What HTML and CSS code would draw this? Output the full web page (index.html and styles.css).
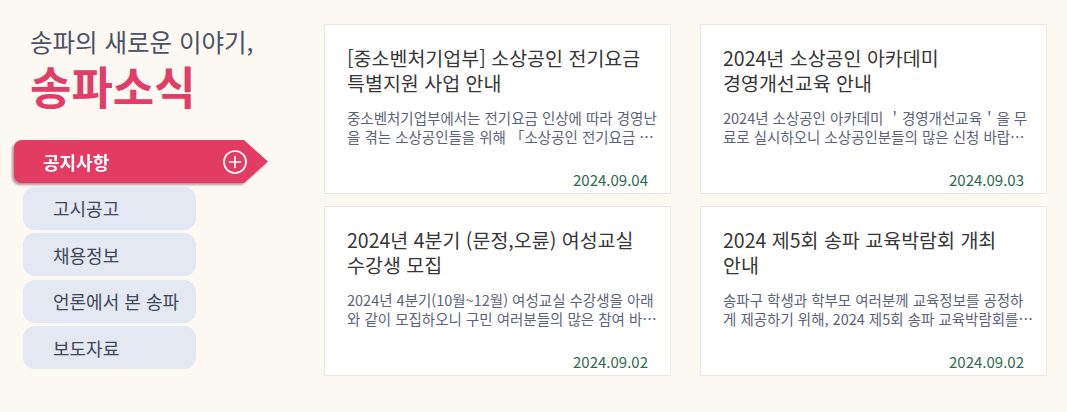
FILE: index.html
```html
<!DOCTYPE html>
<html lang="ko">
<head>
    <meta charset="UTF-8">
    <meta name="viewport" content="width=device-width, initial-scale=1.0">
    <title>송파소식</title>
    <link rel="stylesheet" href="styles.css">
</head>
<body>
    <div class="page">
        <div class="sidebar">
            <div class="heading">
                <p class="sub">송파의 새로운 이야기,</p>
                <h1>송파소식</h1>
            </div>
            <ul class="menu">
                <li class="tab-wrap">
                    <a class="tab active" href="#">
                        <span>공지사항</span>
                        <svg class="plus" width="26" height="26" viewBox="0 0 26 26">
                            <circle cx="13" cy="13" r="11" fill="none" stroke="#fff" stroke-width="1.7"/>
                            <path d="M13 7.5v11M7.5 13h11" stroke="#fff" stroke-width="1.7" stroke-linecap="round"/>
                        </svg>
                    </a>
                </li>
                <li><a class="item" href="#">고시공고</a></li>
                <li><a class="item" href="#">채용정보</a></li>
                <li><a class="item" href="#">언론에서 본 송파</a></li>
                <li><a class="item" href="#">보도자료</a></li>
            </ul>
        </div>

        <div class="cards">
            <a class="card" href="#">
                <h3>[중소벤처기업부] 소상공인 전기요금 특별지원 사업 안내</h3>
                <p class="desc">중소벤처기업부에서는 전기요금 인상에 따라 경영난을 겪는 소상공인들을 위해 「소상공인 전기요금 특별지원 사업」을 실시합니다.</p>
                <span class="date">2024.09.04</span>
            </a>
            <a class="card" href="#">
                <h3>2024년 소상공인 아카데미 경영개선교육 안내</h3>
                <p class="desc">2024년 소상공인 아카데미 ＇경영개선교육＇을 무료로 실시하오니 소상공인분들의 많은 신청 바랍니다.</p>
                <span class="date">2024.09.03</span>
            </a>
            <a class="card" href="#">
                <h3>2024년 4분기 (문정,오륜) 여성교실 수강생 모집</h3>
                <p class="desc">2024년 4분기(10월~12월) 여성교실 수강생을 아래와 같이 모집하오니 구민 여러분들의 많은 참여 바랍니다.</p>
                <span class="date">2024.09.02</span>
            </a>
            <a class="card" href="#">
                <h3>2024 제5회 송파 교육박람회 개최 안내</h3>
                <p class="desc">송파구 학생과 학부모 여러분께 교육정보를 공정하게 제공하기 위해, 2024 제5회 송파 교육박람회를 개최합니다.</p>
                <span class="date">2024.09.02</span>
            </a>
        </div>
    </div>
</body>
</html>
```

FILE: styles.css
```css
body {
    margin: 0;
    background: #fcf9f3;
    font-family: "Noto Sans CJK KR", "Noto Sans", sans-serif;
    color: #333;
}
a { text-decoration: none; }

.page {
    display: flex;
    padding: 0 20px 0 14px;
    gap: 56px;
}

/* left column */
.sidebar { width: 254px; }
.heading { padding: 27px 0 0 16px; }
.sub {
    margin: 0;
    font-size: 24.5px;
    line-height: 30px;
    color: #4b5166;
}
h1 {
    margin: 4px 0 0;
    font-size: 45px;
    line-height: 50px;
    font-weight: 700;
    color: #e23d66;
}

.menu {
    list-style: none;
    margin: 29px 0 0;
    padding: 0;
    display: flex;
    flex-direction: column;
    gap: 3.5px;
}
.tab-wrap { filter: drop-shadow(-2px 2px 1px rgba(90, 30, 45, 0.45)); }
.tab {
    display: flex;
    align-items: center;
    justify-content: space-between;
    height: 43px;
    padding: 0 20px 0 29px;
    background: #e23c63;
    border-radius: 8px 0 0 8px;
    clip-path: polygon(0 0, calc(100% - 24px) 0, 100% 50%, calc(100% - 24px) 100%, 0 100%);
    color: #fff;
    font-size: 18px;
    font-weight: 700;
}
.plus { display: block; }
.item {
    display: flex;
    align-items: center;
    margin-left: 9px;
    width: 173px;
    height: 43px;
    padding-left: 30px;
    box-sizing: border-box;
    background: #e3e8f2;
    border-radius: 12px;
    color: #40465a;
    font-size: 18px;
}

/* cards */
.cards {
    display: grid;
    grid-template-columns: 347px 347px;
    grid-template-rows: 170px 170px;
    column-gap: 29px;
    row-gap: 12px;
    padding-top: 24px;
}
.card {
    display: flex;
    flex-direction: column;
    background: #fff;
    border: 1px solid #ebe8e1;
    padding: 20px 11px 3px 22px;
    color: #333;
}
.card h3 {
    margin: 0;
    padding-right: 10px;
    font-size: 19.5px;
    line-height: 25px;
    font-weight: 400;
    color: #363636;
    word-break: keep-all;
}
.desc {
    margin: 13px 0 0;
    font-size: 14.5px;
    line-height: 19px;
    color: #5c6378;
    display: -webkit-box;
    -webkit-line-clamp: 2;
    -webkit-box-orient: vertical;
    overflow: hidden;
}
.date {
    margin-top: auto;
    margin-right: 11px;
    text-align: right;
    font-size: 15px;
    line-height: 20px;
    color: #2e6b4f;
}
```
